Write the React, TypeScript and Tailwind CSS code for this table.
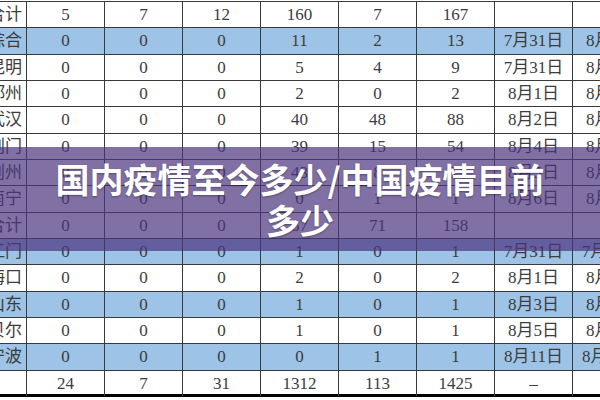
const rows = [
  { name: "江苏合计", cells: ["5", "7", "12", "160", "7", "167", "", ""], blue: false },
  { name: "综合", cells: ["0", "0", "0", "11", "2", "13", "7月31日", "8月1日"], blue: true },
  { name: "昆明", cells: ["0", "0", "0", "5", "4", "9", "7月31日", "8月1日"], blue: false },
  { name: "郑州", cells: ["0", "0", "0", "2", "0", "2", "8月1日", "8月2日"], blue: false },
  { name: "武汉", cells: ["0", "0", "0", "40", "48", "88", "8月2日", "8月3日"], blue: false },
  { name: "荆门", cells: ["0", "0", "0", "39", "15", "54", "8月4日", "8月4日"], blue: false },
  { name: "荆州", cells: ["0", "0", "0", "43", "8", "83", "8月5日", "8月5日"], blue: false },
  { name: "南宁", cells: ["0", "0", "0", "0", "1", "1", "8月6日", "8月6日"], blue: false },
  { name: "合计", cells: ["0", "0", "0", "87", "71", "158", "", ""], blue: false },
  { name: "江门", cells: ["0", "0", "0", "1", "0", "1", "7月31日", "7月31日"], blue: true },
  { name: "海口", cells: ["0", "0", "0", "2", "0", "2", "8月1日", "8月1日"], blue: false },
  { name: "山东", cells: ["0", "0", "0", "1", "0", "1", "8月3日", "8月3日"], blue: true },
  { name: "呼伦贝尔", cells: ["0", "0", "0", "1", "0", "1", "8月5日", "8月5日"], blue: false },
  { name: "宁波", cells: ["0", "0", "0", "0", "1", "1", "8月11日", "8月11日"], blue: true },
  { name: "", cells: ["24", "7", "31", "1312", "113", "1425", "–", ""], blue: false },
];

const App = () => {
  return (
    <div className="relative w-[600px] h-[400px] overflow-hidden bg-white">
      {/* Spreadsheet */}
      <div
        className="ml-[-53px] mt-px w-[704px] border-t border-[#3a3a3a] text-[17px] text-[#3c3c3c]"
        style={{ fontFamily: '"Liberation Serif", "Noto Sans CJK SC", serif' }}
      >
        {rows.map((row, i) => (
          <div
            key={i}
            className={`grid grid-cols-[80px_repeat(8,78px)] h-[26.33px] ${
              i === rows.length - 1 ? "border-b-[3px] border-black" : "border-b border-[#3a3a3a]"
            } ${row.blue ? "bg-[#9dc3e6]" : "bg-white"}`}
          >
            <div className="flex items-center justify-end pr-1 border-r border-[#3a3a3a] whitespace-nowrap">
              {row.name}
            </div>
            {row.cells.map((c, j) => (
              <div
                key={j}
                className="flex items-center justify-center border-r border-[#3a3a3a] whitespace-nowrap"
              >
                {c}
              </div>
            ))}
          </div>
        ))}
      </div>

      {/* Title banner */}
      <div className="absolute left-0 right-0 top-[147px] h-[104px] bg-[rgba(74,51,126,0.7)] flex items-center justify-center">
        <h1
          className="w-[520px] text-center text-[34px] leading-[41px] font-bold text-white [text-shadow:0_1px_2px_rgba(0,0,0,0.35)]"
          style={{ fontFamily: '"Noto Sans CJK SC", "Noto Sans", sans-serif' }}
        >
          国内疫情至今多少/中国疫情目前多少
        </h1>
      </div>
    </div>
  );
};

export default App;
